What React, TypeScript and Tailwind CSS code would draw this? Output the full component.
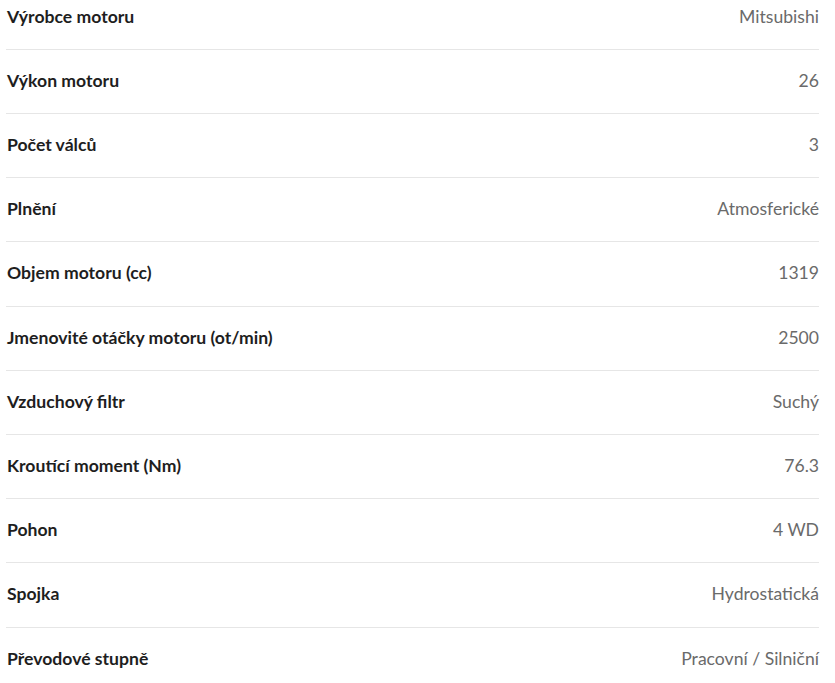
const rows: [string, string][] = [
  ["Výrobce motoru", "Mitsubishi"],
  ["Výkon motoru", "26"],
  ["Počet válců", "3"],
  ["Plnění", "Atmosferické"],
  ["Objem motoru (cc)", "1319"],
  ["Jmenovité otáčky motoru (ot/min)", "2500"],
  ["Vzduchový filtr", "Suchý"],
  ["Kroutící moment (Nm)", "76.3"],
  ["Pohon", "4 WD"],
  ["Spojka", "Hydrostatická"],
  ["Převodové stupně", "Pracovní / Silniční"],
];

export default function App() {
  return (
    <div className="h-[683px] w-[835px] overflow-hidden bg-white font-['Lato','Liberation_Sans',sans-serif] text-[17.6px]">
      <div className="-mt-[14.5px] ml-[6px] w-[813px]">
        {rows.map(([label, value]) => (
          <div
            key={label}
            className="flex items-center justify-between border-b border-[#e6e6e6] pt-[19px] pb-[21px] leading-[23.2px]"
          >
            <span className="pl-px font-bold text-[#1e1e1e]">{label}</span>
            <span className="text-[#6a6a6a]">{value}</span>
          </div>
        ))}
      </div>
    </div>
  );
}
